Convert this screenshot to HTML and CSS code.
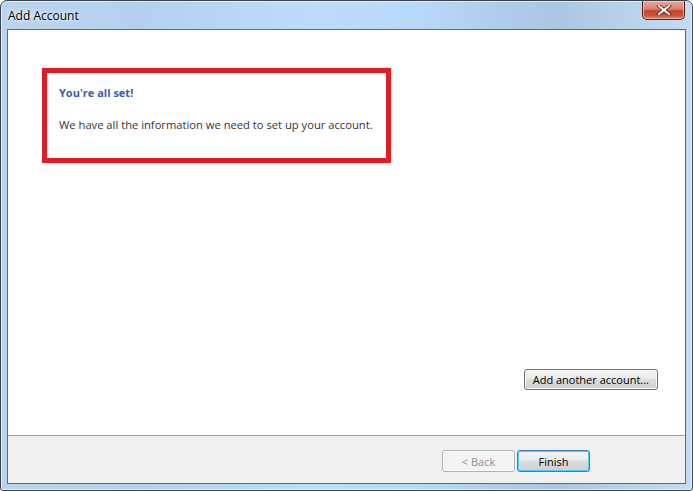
FILE: index.html
```html
<!DOCTYPE html>
<html>
<head>
<meta charset="utf-8">
<title>Add Account</title>
<link rel="stylesheet" href="styles.css">
</head>
<body>
<div class="window">
  <div class="titlebar">
    <span class="title">Add Account</span>
    <div class="close">
      <svg width="16" height="10" viewBox="0 0 16 10"><path d="M3 1 L13 9 M13 1 L3 9" stroke="#5a1a14" stroke-width="3.6" stroke-linecap="square"/><path d="M3 1 L13 9 M13 1 L3 9" stroke="#ffffff" stroke-width="2" stroke-linecap="square"/></svg>
    </div>
  </div>
  <div class="client">
    <div class="content">
      <div class="highlight">
        <div class="heading">You're all set!</div>
        <div class="message">We have all the information we need to set up your account.</div>
      </div>
      <div class="spacer"></div>
      <div class="another-row">
        <button class="btn another">Add another account...</button>
      </div>
    </div>
    <div class="footer">
      <button class="btn nav disabled">&lt; Back</button>
      <button class="btn nav default">Finish</button>
    </div>
  </div>
</div>
</body>
</html>
```
FILE: styles.css
```css
html, body {
  margin: 0;
  padding: 0;
  width: 693px;
  height: 491px;
  overflow: hidden;
  background: #ffffff;
  font-family: "Open Sans", "Noto Sans", sans-serif;
}

.window {
  box-sizing: border-box;
  width: 693px;
  height: 491px;
  border: 1px solid #3a4450;
  border-radius: 7px 7px 3px 3px;
  background: linear-gradient(90deg, #b9d4ec 0%, #b3d1ef 20%, #bcdcf9 45%, #b9d9f8 60%, #a9c6e2 80%, #c4dcf2 100%);
  display: flex;
  flex-direction: column;
  padding: 0 6px 6px 6px;
  box-shadow: inset 0 0 0 1px rgba(255,255,255,0.6);
}

.titlebar {
  height: 28px;
  display: flex;
  align-items: flex-start;
  flex-shrink: 0;
}

.title {
  margin-top: 6px;
  margin-left: 1px;
  font-family: "Open Sans", "Noto Sans", sans-serif;
  font-size: 12px;
  color: #000;
  text-shadow: 0 0 6px rgba(255,255,255,0.9), 0 0 3px rgba(255,255,255,0.9);
}

.close {
  margin-left: auto;
  margin-right: 1px;
  width: 43px;
  height: 19px;
  box-sizing: border-box;
  border: 1px solid #5b1f18;
  border-top: none;
  border-radius: 0 0 5px 5px;
  background: linear-gradient(180deg, #e8a89a 0%, #d9826e 45%, #c3452a 55%, #c8553a 80%, #d98a70 100%);
  display: flex;
  align-items: center;
  justify-content: center;
  box-shadow: inset 0 0 0 1px rgba(255,220,210,0.55);
}

.client {
  flex: 1;
  display: flex;
  flex-direction: column;
  border: 1px solid #5f6a76;
  background: #f0f0f0;
}

.content {
  height: 406px;
  background: #ffffff;
  border-bottom: 1px solid #a0a0a0;
  display: flex;
  flex-direction: column;
  box-sizing: border-box;
}

.highlight {
  margin: 38px 0 0 34px;
  width: 349px;
  height: 95px;
  box-sizing: border-box;
  border: 5px solid #e21c24;
  padding: 12px 0 0 12px;
}

.heading {
  font-size: 11px;
  font-weight: bold;
  color: #3a5daa;
  line-height: 16px;
}

.message {
  margin-top: 16px;
  font-size: 11.2px;
  color: #333;
  line-height: 16px;
}

.spacer {
  flex: 1;
}

.another-row {
  display: flex;
  justify-content: flex-end;
  padding-right: 27px;
  margin-bottom: 45px;
}

.btn {
  font-family: "Open Sans", "Noto Sans", sans-serif;
  font-size: 11px;
  color: #000;
  height: 21px;
  padding: 0 7px;
  border: 1px solid #707070;
  border-radius: 3px;
  background: linear-gradient(180deg, #f2f2f2 0%, #ebebeb 45%, #dddddd 50%, #cfcfcf 100%);
  box-shadow: inset 0 0 0 1px rgba(255,255,255,0.8);
  line-height: 17px;
}

.another {
  padding: 0 8px;
}

.footer {
  flex: 1;
  display: flex;
  justify-content: flex-end;
  align-items: flex-start;
  padding: 14px 95px 0 0;
  gap: 2px;
}

.nav {
  width: 73px;
  height: 22px;
}

.disabled {
  color: #8d8d8d;
  border-color: #adb2b5;
  background: #f4f4f4;
}

.default {
  border-color: #3c7fb1;
  box-shadow: inset 0 0 0 1px #48d0fb;
  background: linear-gradient(180deg, #f2f2f2 0%, #ebebeb 45%, #dddddd 50%, #cfcfcf 100%);
}
```
